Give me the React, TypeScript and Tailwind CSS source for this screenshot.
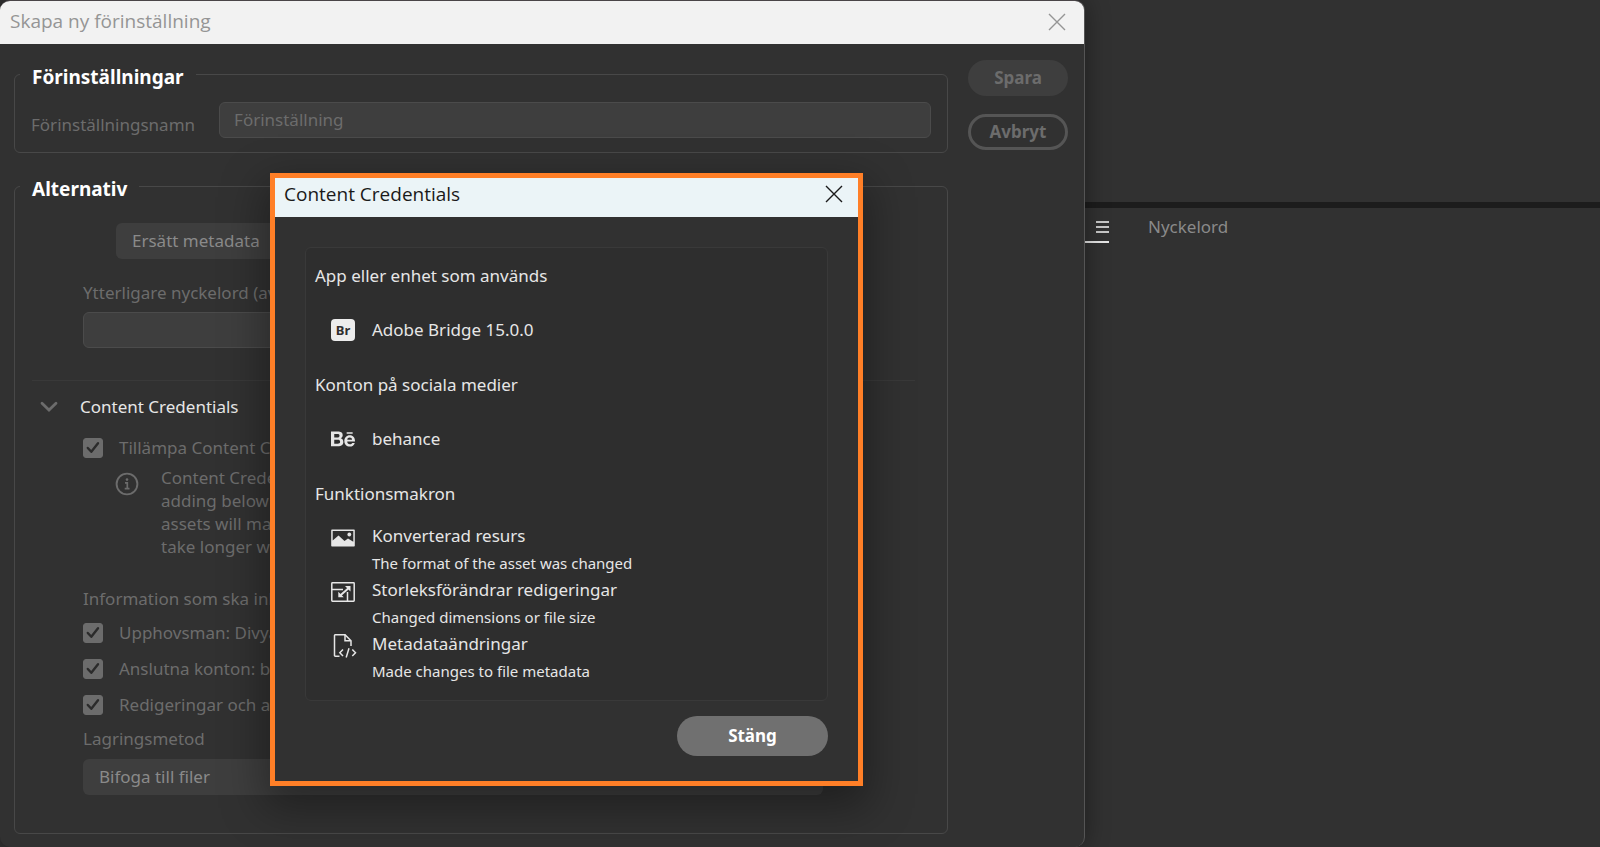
import type { ReactNode } from "react";
import { FaBehance } from "react-icons/fa";

type ChangeEntry = {
  title: string;
  detail: string;
  icon: ReactNode;
};

const changes: ChangeEntry[] = [
  {
    title: "Konverterad resurs",
    detail: "The format of the asset was changed",
    icon: <ImageIcon />,
  },
  {
    title: "Storleksförändrar redigeringar",
    detail: "Changed dimensions or file size",
    icon: <ResizeIcon />,
  },
  {
    title: "Metadataändringar",
    detail: "Made changes to file metadata",
    icon: <FileCodeIcon />,
  },
];

const noticeLines = [
  "Content Credentials",
  "adding below data",
  "assets will make it",
  "take longer while",
];

const includedInfo = ["Upphovsman: Divya", "Anslutna konton: behance", "Redigeringar och aktivitet"];

function CloseIcon() {
  return (
    <svg viewBox="0 0 18 18" className="size-[18px]" fill="none" stroke="currentColor" strokeWidth="1.4">
      <path d="M1 1l16 16M17 1L1 17" />
    </svg>
  );
}

function ImageIcon() {
  return (
    <svg viewBox="0 0 24 18" className="h-[18px] w-6" fill="currentColor">
      <path
        fillRule="evenodd"
        d="M1 .5h22a.8.8 0 0 1 .8.8v15.4a.8.8 0 0 1-.8.8H1a.8.8 0 0 1-.8-.8V1.3A.8.8 0 0 1 1 .5zM1.700 2v9.500L7.500 6.500l6 5.500 3.500-2.500 5.300 3.300V2z"
      />
      <circle cx="18.300" cy="5.500" r="1.900" />
    </svg>
  );
}

function ResizeIcon() {
  return (
    <svg viewBox="0 0 24 20" className="h-5 w-6" fill="none" stroke="currentColor" strokeWidth="1.500">
      <rect x=".8" y=".8" width="22.400" height="18.400" rx=".6" />
      <path d="M1 7.500h11M16.500 10v9" />
      <path d="M9.500 13.300l8-7" strokeWidth="2" />
      <path d="M14 4h5.500v5.500zM7.300 9.800v5.500h5.500z" fill="currentColor" stroke="none" />
    </svg>
  );
}

function FileCodeIcon() {
  return (
    <svg viewBox="0 0 24 24" className="ml-[3px] size-6 shrink-0" fill="none" stroke="currentColor" strokeWidth="1.500">
      <path d="M6.500 22.300H2.300a.8.8 0 0 1-.8-.8V1.500a.8.8 0 0 1 .8-.8H12l6 6V12" />
      <path d="M12 .8v6h6" />
      <path d="M10 15.500l-3.200 3.300 3.200 3.300M19.300 15.500l3.200 3.300-3.200 3.300M16 14.300l-2.800 9.200" />
    </svg>
  );
}

function InfoIcon() {
  return (
    <svg viewBox="0 0 24 24" className="size-6 shrink-0" fill="none" stroke="currentColor" strokeWidth="1.900">
      <circle cx="12" cy="12" r="10.400" />
      <path d="M10 10.800h2.300v5.500M9.700 16.600h4.800" strokeWidth="1.700" />
      <circle cx="12" cy="7.600" r="1.300" fill="currentColor" stroke="none" />
    </svg>
  );
}

function ChevronIcon() {
  return (
    <svg viewBox="0 0 18 12" className="h-3 w-[18px]" fill="none" stroke="currentColor" strokeWidth="2.800">
      <path d="M2 2.200l7 6.800 7-6.800" strokeLinecap="round" />
    </svg>
  );
}

function Checkbox({ label }: { label: string }) {
  return (
    <label className="flex h-6 items-center gap-4 whitespace-nowrap">
      <span className="relative size-5 shrink-0">
        <input
          type="checkbox"
          defaultChecked
          className="peer block size-5 appearance-none rounded-[3px] border border-[#6c6c6c] checked:bg-[#6c6c6c]"
        />
        <svg
          viewBox="0 0 20 20"
          className="pointer-events-none absolute inset-0 hidden size-5 peer-checked:block"
          fill="none"
          stroke="#2b2b2b"
          strokeWidth="2.400"
          strokeLinecap="round"
          strokeLinejoin="round"
        >
          <path d="M4.800 10l3.500 3.800L15 5.300" />
        </svg>
      </span>
      {label}
    </label>
  );
}

function Group({ title, children }: { title: string; children: ReactNode }) {
  return (
    <fieldset className="min-w-0 rounded-md border border-[#484848]">
      <legend className="ml-[5px] h-7 px-3 pt-[5px] text-[19px] leading-6 font-bold text-white">{title}</legend>
      {children}
    </fieldset>
  );
}

function CredentialsModal() {
  return (
    <div
      role="dialog"
      aria-label="Content Credentials"
      className="absolute top-[173px] left-[270px] w-[593px] border-[5px] border-[#ff7f27] bg-[#313131] text-[#e6e6e6] shadow-[0_16px_40px_6px_rgba(0,0,0,0.35)]"
    >
      <header className="flex h-[39px] items-center justify-between bg-[#ebf4f7] pr-[15px] pb-[7px] pl-[9px] font-['Open_Sans','Noto_Sans',sans-serif] text-[19px] leading-6 text-[#1a1a1a]">
        <h2>Content Credentials</h2>
        <button type="button" aria-label="Stäng fönstret">
          <CloseIcon />
        </button>
      </header>

      <div className="px-[30px] pt-[30px] pb-[25px]">
        <div className="rounded-md border border-[#393939] bg-[#2e2e2e] px-[9px] pt-4 pb-[15px] leading-6">
          <h3>App eller enhet som används</h3>
          <div className="mt-[30px] flex items-center gap-[17px] pl-4">
            <span className="flex h-[22px] w-6 items-center justify-center rounded-sm bg-[#ececec] text-[13px] font-bold text-[#2e2e2e]">
              Br
            </span>
            <p>Adobe Bridge 15.0.0</p>
          </div>

          <h3 className="mt-[31px]">Konton på sociala medier</h3>
          <div className="mt-[30px] flex items-center gap-[17px] pl-4">
            <FaBehance className="size-6" />
            <p>behance</p>
          </div>

          <h3 className="mt-[31px]">Funktionsmakron</h3>
          <ul className="mt-[17px]">
            {changes.map((change) => (
              <li key={change.title} className="flex gap-[17px] pl-4">
                <span className="flex h-[30px] w-6 items-center justify-center">{change.icon}</span>
                <div>
                  <p className="leading-[26px]">{change.title}</p>
                  <p className="text-[15px] leading-7">{change.detail}</p>
                </div>
              </li>
            ))}
          </ul>
        </div>

        <div className="mt-[15px] flex justify-end">
          <button type="button" className="h-10 w-[151px] rounded-full bg-[#707070] pb-px font-bold text-white">
            Stäng
          </button>
        </div>
      </div>
    </div>
  );
}

function PresetDialog() {
  return (
    <section className="relative w-[1085px] shrink-0 overflow-hidden rounded-[10px] border-t border-r border-t-[#4a4548] border-r-[#555] bg-[#313131] pb-[11px] text-[#6c6c6c] shadow-[0_0_24px_rgba(0,0,0,0.4)]">
      <header className="flex h-[43px] items-center justify-between bg-[#f2f2f2] pr-[18px] pb-0.5 pl-[10px] font-['Open_Sans','Noto_Sans',sans-serif] text-[19px] text-[#959595]">
        <h1>Skapa ny förinställning</h1>
        <button type="button" aria-label="Stäng">
          <CloseIcon />
        </button>
      </header>

      <form className="flex gap-5 pt-4 pr-4 pl-[14px]" onSubmit={(e) => e.preventDefault()}>
        <div className="flex min-w-0 flex-1 flex-col gap-[19px]">
          <Group title="Förinställningar">
            <div className="flex items-end gap-6 px-4 py-[14px]">
              <label htmlFor="preset-name" className="leading-[26px]">
                Förinställningsnamn
              </label>
              <input
                id="preset-name"
                placeholder="Förinställning"
                className="h-9 min-w-0 flex-1 rounded-md border border-[#4b4b4b] bg-[#3e3e3e] px-[14px] pb-0.5 placeholder:text-[#6c6c6c]"
              />
            </div>
          </Group>

          <Group title="Alternativ">
            <div className="px-[68px] pt-[23px]">
              <select
                aria-label="Metadata"
                className="ml-[33px] block h-9 w-72 appearance-none rounded-md bg-[#3e3e3e] px-4 text-[#8a8a8a]"
              >
                <option>Ersätt metadata</option>
              </select>
              <label htmlFor="keywords" className="mt-[22px] block leading-6">
                Ytterligare nyckelord (avgränsade)
              </label>
              <input
                id="keywords"
                className="mt-[7px] block h-9 w-[740px] rounded-md border border-[#4b4b4b] bg-[#3e3e3e] px-4"
              />
            </div>

            <div className="mt-8 mr-8 ml-[17px] border-t border-[#393939]" />

            <button
              type="button"
              aria-expanded="true"
              className="mt-[14px] ml-[25px] flex items-center gap-[22px] leading-6 text-[#e6e6e6]"
            >
              <span className="text-[#6c6c6c]">
                <ChevronIcon />
              </span>
              Content Credentials
            </button>

            <div className="px-[68px] pt-[17px] pb-[38px] leading-6">
              <Checkbox label="Tillämpa Content Credentials" />
              <div className="mt-[6px] flex gap-[22px] pl-8 leading-[23px]">
                <div className="pt-[6px]">
                  <InfoIcon />
                </div>
                <p>
                  {noticeLines.map((line) => (
                    <span key={line} className="block">
                      {line}
                    </span>
                  ))}
                </p>
              </div>

              <p className="mt-[29px]">Information som ska inkluderas</p>
              <div className="mt-[10px] grid gap-3">
                {includedInfo.map((label) => (
                  <Checkbox key={label} label={label} />
                ))}
              </div>

              <label htmlFor="storage" className="mt-[10px] block">
                Lagringsmetod
              </label>
              <select
                id="storage"
                className="mt-2 block h-9 w-[740px] appearance-none rounded-md bg-[#3e3e3e] px-4 text-[#8a8a8a]"
              >
                <option>Bifoga till filer</option>
              </select>
            </div>
          </Group>
        </div>

        <div className="flex w-[100px] flex-col gap-[18px] font-bold">
          <button type="submit" className="h-9 rounded-full bg-[#3e3e3e]">
            Spara
          </button>
          <button type="button" className="h-9 rounded-full border-[3px] border-[#555]">
            Avbryt
          </button>
        </div>
      </form>
    </section>
  );
}

function KeywordsPanel() {
  return (
    <aside className="min-w-0 flex-1">
      <div className="box-content h-[202px] border-b-[6px] border-[#1c1c1c]" />
      <nav className="flex h-[35px] items-stretch gap-[39px]">
        <button
          type="button"
          aria-label="Panelmeny"
          className="flex w-6 flex-col items-end justify-center gap-[3px] border-b-2 border-[#e6e6e6] pt-1"
        >
          <span className="h-0.5 w-[13px] bg-[#c8c8c8]" />
          <span className="h-0.5 w-[13px] bg-[#c8c8c8]" />
          <span className="h-0.5 w-[13px] bg-[#c8c8c8]" />
        </button>
        <button type="button" className="pt-0.5 text-[#8a8a8a]">
          Nyckelord
        </button>
      </nav>
    </aside>
  );
}

export default function App() {
  return (
    <main className="relative flex min-h-screen overflow-hidden bg-[#313131] font-['Noto_Sans','Open_Sans',sans-serif] text-[17px]">
      <PresetDialog />
      <KeywordsPanel />
      <CredentialsModal />
    </main>
  );
}
